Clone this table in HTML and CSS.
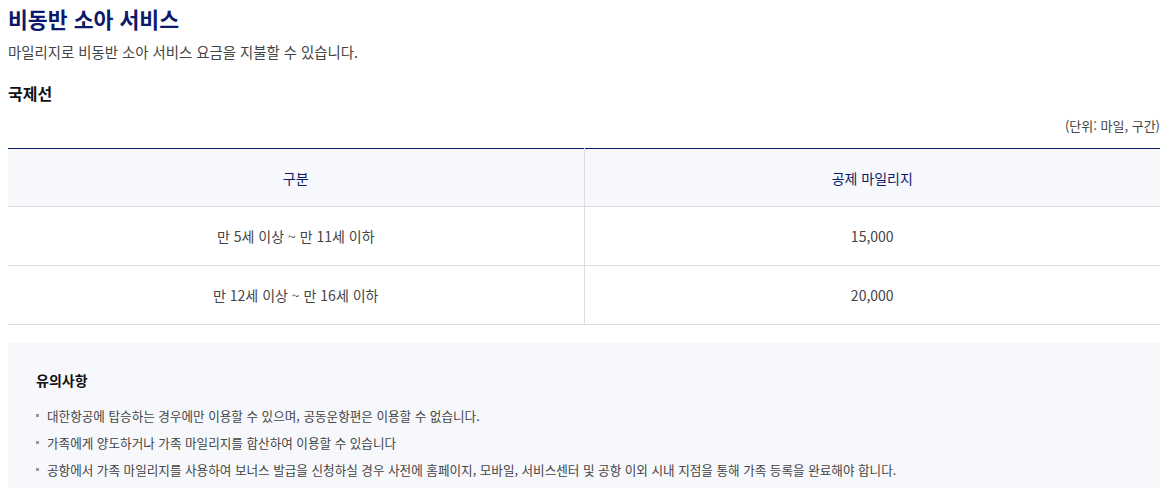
FILE: index.html
```html
<!DOCTYPE html>
<html lang="ko">
<head>
<meta charset="utf-8">
<link rel="stylesheet" href="styles.css">
</head>
<body>
<div class="page">
  <h1 class="title">비동반 소아 서비스</h1>
  <p class="desc">마일리지로 비동반 소아 서비스 요금을 지불할 수 있습니다.</p>
  <h2 class="section">국제선</h2>
  <p class="unit">(단위: 마일, 구간)</p>
  <table class="tbl">
    <thead>
      <tr><th>구분</th><th>공제 마일리지</th></tr>
    </thead>
    <tbody>
      <tr><td>만 5세 이상 ~ 만 11세 이하</td><td>15,000</td></tr>
      <tr><td>만 12세 이상 ~ 만 16세 이하</td><td>20,000</td></tr>
    </tbody>
  </table>
  <div class="notice">
    <h3 class="notice-title">유의사항</h3>
    <ul class="notice-list">
      <li>대한항공에 탑승하는 경우에만 이용할 수 있으며, 공동운항편은 이용할 수 없습니다.</li>
      <li>가족에게 양도하거나 가족 마일리지를 합산하여 이용할 수 있습니다</li>
      <li>공항에서 가족 마일리지를 사용하여 보너스 발급을 신청하실 경우 사전에 홈페이지, 모바일, 서비스센터 및 공항 이외 시내 지점을 통해 가족 등록을 완료해야 합니다.</li>
    </ul>
  </div>
</div>
</body>
</html>
```

FILE: styles.css
```css
* { box-sizing: border-box; }
html, body { margin: 0; padding: 0; background: #fff; }
body {
  padding: 0 12px 0 8px;
  font-family: "Noto Sans CJK KR", "Noto Sans", sans-serif;
  color: #333;
}
.title {
  margin: 4px 0 0;
  font-size: 21.6px;
  line-height: 30px;
  font-weight: 700;
  color: #0c1a6b;
}
.desc {
  margin: 8px 0 0;
  font-size: 14.4px;
  line-height: 20px;
  color: #444;
}
.section {
  margin: 20px 0 0;
  font-size: 16px;
  line-height: 22px;
  font-weight: 700;
  color: #111;
}
.unit {
  margin: 13px 0 0;
  text-align: right;
  font-size: 13px;
  line-height: 18px;
  color: #444;
}
.tbl {
  width: 100%;
  margin-top: 13px;
  border-collapse: collapse;
  border-top: 1px solid #0c1a6b;
  table-layout: fixed;
}
.tbl th, .tbl td {
  text-align: center;
  font-size: 14px;
  border-bottom: 1px solid #ddd;
}
.tbl th + th, .tbl td + td { border-left: 1px solid #ddd; }
.tbl th {
  height: 58px;
  background: #f7f8fc;
  font-weight: 400;
  color: #0c1a6b;
}
.tbl td {
  height: 59px;
  color: #444;
}
.notice {
  margin-top: 18px;
  background: #f7f8fc;
  padding: 27px 28px 24px;
}
.notice-title {
  margin: 0;
  font-size: 14px;
  line-height: 20px;
  font-weight: 700;
  color: #111;
}
.notice-list {
  margin: 12px 0 0;
  padding: 0;
  list-style: none;
}
.notice-list li {
  position: relative;
  padding-left: 11px;
  font-size: 12.6px;
  line-height: 27px;
  color: #444;
}
.notice-list li::before {
  content: "";
  position: absolute;
  left: 0;
  top: 12px;
  width: 3px;
  height: 3px;
  background: #999;
}
```
